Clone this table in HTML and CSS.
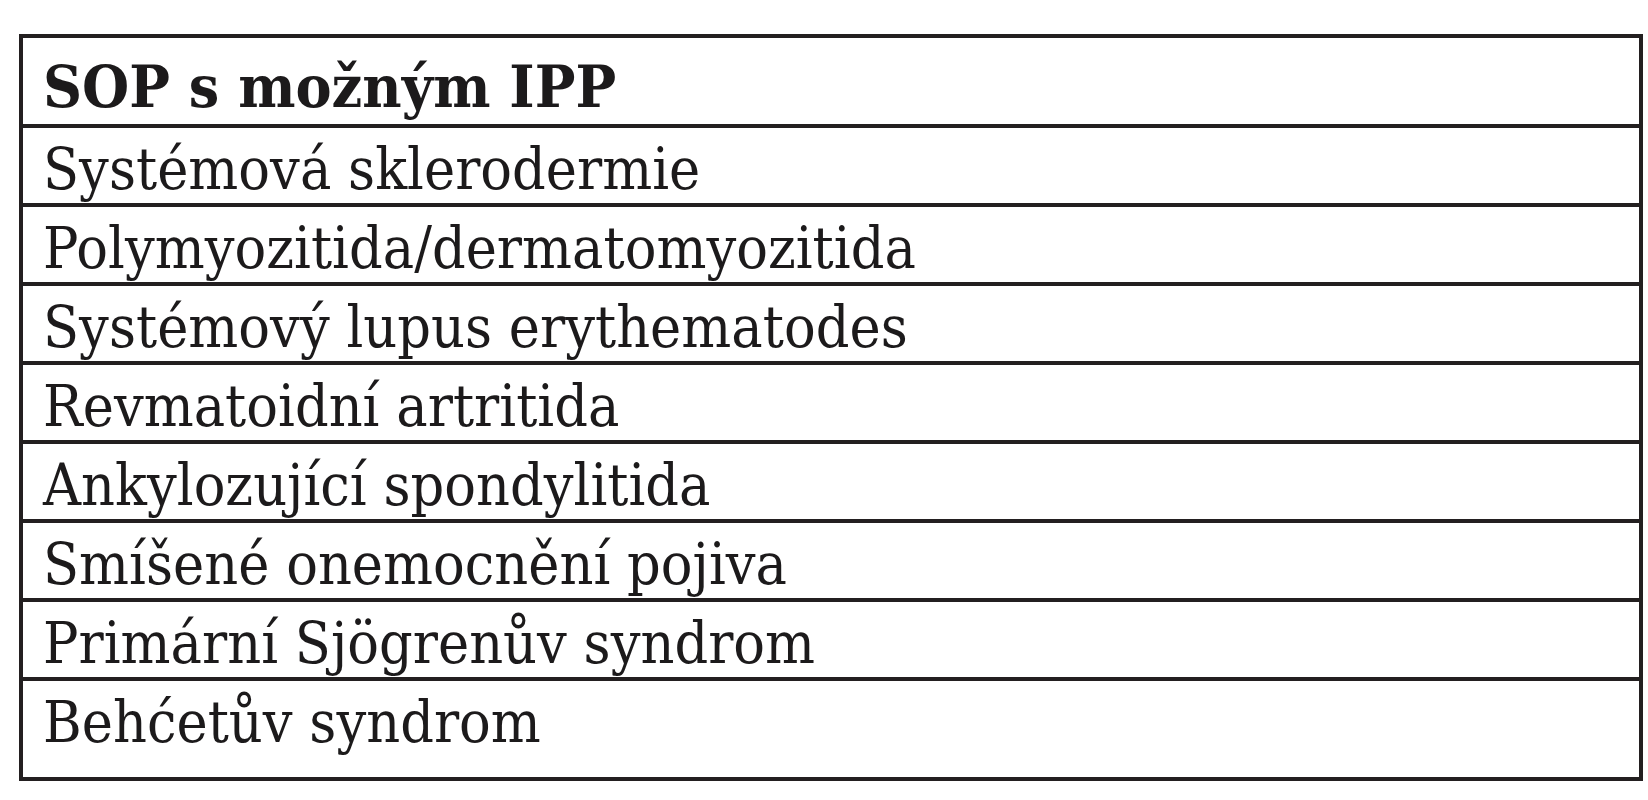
FILE: index.html
```html
<!DOCTYPE html>
<html lang="cs">
<head>
<meta charset="utf-8">
<title>SOP s možným IPP</title>
<link rel="stylesheet" href="styles.css">
</head>
<body>
<div class="tbl">
  <div class="row head"><span class="txt">SOP s možným IPP</span></div>
  <div class="row"><span class="txt">Systémová sklerodermie</span></div>
  <div class="row"><span class="txt">Polymyozitida/dermatomyozitida</span></div>
  <div class="row"><span class="txt">Systémový lupus erythematodes</span></div>
  <div class="row"><span class="txt">Revmatoidní artritida</span></div>
  <div class="row"><span class="txt">Ankylozující spondylitida</span></div>
  <div class="row"><span class="txt">Smíšené onemocnění pojiva</span></div>
  <div class="row"><span class="txt">Primární Sjögrenův syndrom</span></div>
  <div class="row last"><span class="txt">Behćetův syndrom</span></div>
</div>
</body>
</html>
```
FILE: styles.css
```css
html, body {
  margin: 0;
  padding: 0;
  background: #ffffff;
}
body {
  padding: 34px 0 0 19px;
  font-family: "DejaVu Serif", "Liberation Serif", serif;
  color: #1c1a1b;
}
.tbl {
  box-sizing: border-box;
  width: 1624px;
  border: 4px solid #231f20;
  display: flex;
  flex-direction: column;
}
.row {
  box-sizing: border-box;
  height: 79px;
  border-top: 4px solid #231f20;
  padding: 13px 0 0 20px;
  font-size: 57px;
  line-height: 1;
  white-space: nowrap;
}
.txt {
  display: inline-block;
  transform-origin: 0 0;
  transform: scaleX(0.925);
}
.row.head {
  border-top: none;
  height: 86px;
  padding-top: 20px;
  font-weight: bold;
}
.row.head .txt {
  transform: scaleX(0.95);
}
.row.last {
  height: 100px;
}
```
